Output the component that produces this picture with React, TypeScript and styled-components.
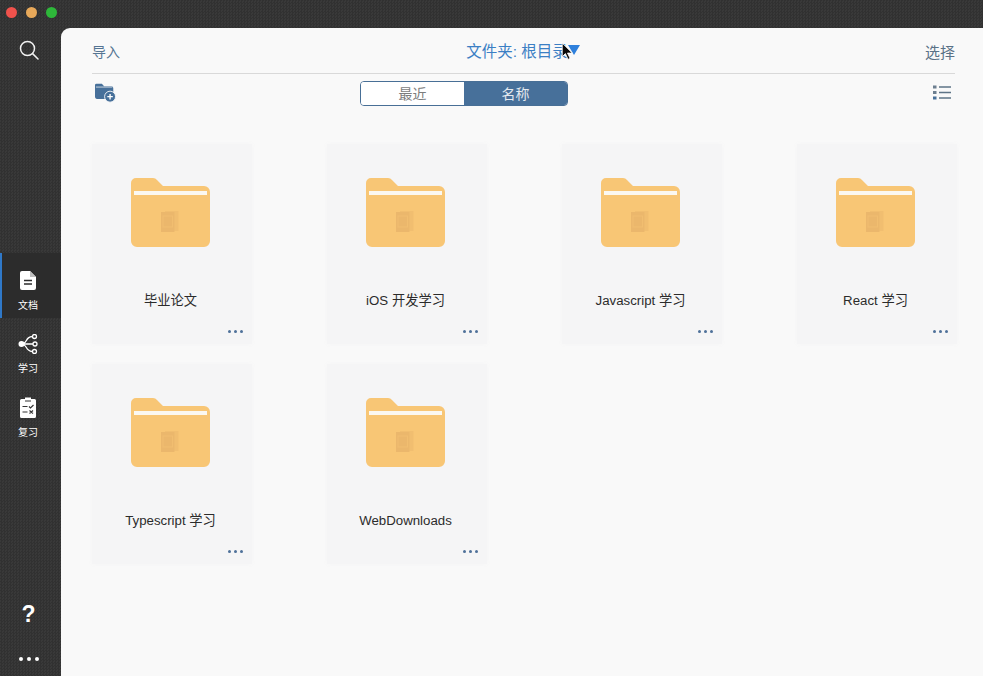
import { createGlobalStyle, styled } from "styled-components";

const GlobalStyle = createGlobalStyle`
  html, body {
    margin: 0;
    padding: 0;
    height: 100%;
    overflow: hidden;
    background: #343434;
    font-family: "Liberation Sans", "Noto Sans CJK SC", sans-serif;
  }
`;

const Window = styled.div`
  position: relative;
  width: 983px;
  height: 676px;
  display: flex;
  flex-direction: column;
  background: repeating-conic-gradient(#313131 0 25%, #393939 0 50%) 0 0 / 3px 3px;
`;

const TitleBar = styled.div`
  height: 28px;
  flex: none;
  display: flex;
  align-items: center;
  gap: 9px;
  padding: 0 0 4px 6px;
  box-sizing: border-box;
`;

const Light = styled.span<{ $color: string }>`
  width: 11px;
  height: 11px;
  border-radius: 50%;
  background: ${(p) => p.$color};
`;

const Body = styled.div`
  flex: 1;
  display: flex;
  min-height: 0;
`;

const Sidebar = styled.nav`
  width: 61px;
  flex: none;
  display: flex;
  flex-direction: column;
  align-items: stretch;
`;

const SearchButton = styled.div`
  height: 44px;
  display: flex;
  justify-content: center;
  align-items: center;
  padding-right: 3px;
`;

const NavGroup = styled.div`
  margin-top: 181px;
  display: flex;
  flex-direction: column;
`;

const NavItem = styled.div<{ $active?: boolean; $height: number; $top: number }>`
  height: ${(p) => p.$height}px;
  box-sizing: border-box;
  display: flex;
  flex-direction: column;
  align-items: center;
  padding: ${(p) => p.$top}px 7px 0 0;
  gap: 8px;
  color: #fff;
  font-size: 10px;
  line-height: 14px;
  background: ${(p) => (p.$active ? "#2c2c2c" : "transparent")};
  border-left: 2px solid ${(p) => (p.$active ? "#2f78c8" : "transparent")};
`;

const NavIcon = styled.span`
  height: 21px;
  display: flex;
  align-items: center;
`;

const SidebarFoot = styled.div`
  margin-top: auto;
  display: flex;
  flex-direction: column;
  align-items: center;
  padding: 0 4px 15px 0;
  gap: 30px;
  color: #fff;
`;

const Help = styled.span`
  font-size: 23px;
  font-weight: 700;
  line-height: 26px;
`;

const MoreDots = styled.span<{ $color: string; $size: number }>`
  display: flex;
  gap: ${(p) => p.$size}px;
  & > i {
    width: ${(p) => p.$size}px;
    height: ${(p) => p.$size}px;
    border-radius: 50%;
    background: ${(p) => p.$color};
  }
`;

const Main = styled.main`
  flex: 1;
  background: #f9f9f9;
  border-top-left-radius: 9px;
  padding: 0 28px 0 31px;
  display: flex;
  flex-direction: column;
  min-width: 0;
`;

const Header = styled.header`
  height: 46px;
  flex: none;
  display: grid;
  grid-template-columns: 1fr auto 1fr;
  align-items: center;
  border-bottom: 1px solid #d9d9d9;
  padding-top: 2px;
  box-sizing: border-box;
`;

const ImportLink = styled.span`
  color: #557593;
  font-size: 14px;
  margin-top: -1px;
`;

const FolderTitle = styled.span`
  color: #3b7fc4;
  font-size: 15.5px;
  display: flex;
  align-items: center;
  margin: -3px 0 0 -1px;
`;

const Caret = styled.span`
  width: 0;
  height: 0;
  margin-top: -1px;
  border-left: 6px solid transparent;
  border-right: 6px solid transparent;
  border-top: 10px solid #2f80dc;
`;

const SelectLink = styled.span`
  justify-self: end;
  color: #5a7186;
  font-size: 15px;
`;

const Toolbar = styled.div`
  height: 39px;
  flex: none;
  display: grid;
  grid-template-columns: 268px 208px 1fr;
  align-items: center;
`;

const Segmented = styled.div`
  height: 25px;
  display: flex;
  box-sizing: border-box;
  border: 1px solid #486f96;
  border-radius: 4px;
  overflow: hidden;
  margin-top: -1px;
`;

const Segment = styled.span<{ $active?: boolean }>`
  flex: 1;
  display: flex;
  align-items: center;
  justify-content: center;
  font-size: 14px;
  background: ${(p) => (p.$active ? "#47709a" : "#fff")};
  color: ${(p) => (p.$active ? "#e4e9ef" : "#7d7d7d")};
`;

const ListToggle = styled.span`
  justify-self: end;
  display: flex;
  margin: -3px 4px 0 0;
`;

const NewFolder = styled.span`
  display: flex;
  margin: -1px 0 0 3px;
`;

const Grid = styled.section`
  margin-top: 31px;
  display: grid;
  grid-template-columns: repeat(4, 160px);
  grid-auto-rows: 200px;
  column-gap: 75px;
  row-gap: 20px;
`;

const Card = styled.article`
  background: #f5f5f6;
  box-shadow: 0 0 5px #f5f5f6;
  display: flex;
  flex-direction: column;
  align-items: center;
  padding: 34px 3px 0 0;
  box-sizing: border-box;
`;

const CardName = styled.div`
  margin-top: 45px;
  font-size: 13.25px;
  line-height: 18px;
  color: #2b2b2b;
  white-space: nowrap;
`;

const CardMore = styled.div`
  margin-top: 20px;
  align-self: flex-end;
  margin-right: 6px;
`;

const Cursor = styled.svg`
  position: absolute;
  left: 561px;
  top: 42px;
`;

function FolderIcon() {
  return (
    <svg width="79" height="69" viewBox="0 0 79 69">
      <path d="M0 5a5 5 0 0 1 5-5h17a5 5 0 0 1 4 2l6 6h41a6 6 0 0 1 6 6v49a6 6 0 0 1-6 6H6a6 6 0 0 1-6-6z" fill="#f8c675" />
      <rect x="3" y="13" width="73" height="4" fill="#fbf8f1" />
      <rect x="34" y="33" width="13.500" height="20" fill="#f1be70" />
      <rect x="30" y="34" width="13.500" height="20" fill="#ebb76c" />
      <rect x="32" y="38" width="9.500" height="11" fill="none" stroke="#f1be70" strokeWidth="1" />
    </svg>
  );
}

const folders = [
  "毕业论文",
  "iOS 开发学习",
  "Javascript 学习",
  "React 学习",
  "Typescript 学习",
  "WebDownloads",
];

export default function App() {
  return (
    <Window>
      <GlobalStyle />
      <TitleBar>
        <Light $color="#f0524c" />
        <Light $color="#e8a95a" />
        <Light $color="#2eb83a" />
      </TitleBar>
      <Body>
        <Sidebar>
          <SearchButton>
            <svg width="20" height="20" viewBox="0 0 20 20" fill="none" stroke="#f2f2f2" strokeWidth="1.5">
              <circle cx="8.500" cy="8.500" r="7" />
              <path d="M13.600 13.600 19 19" strokeLinecap="round" />
            </svg>
          </SearchButton>
          <NavGroup>
            <NavItem $active $height={65} $top={17}>
              <NavIcon>
                <svg width="16" height="19" viewBox="0 0 16 19">
                  <path d="M2 0h8l6 6v11a2 2 0 0 1-2 2H2a2 2 0 0 1-2-2V2a2 2 0 0 1 2-2z" fill="#fff" />
                  <path d="M4 9.500h8M4 13h8" stroke="#2c2c2c" strokeWidth="1.400" />
                  <path d="M10 0v6h6" fill="#bdbdbd" />
                </svg>
              </NavIcon>
              文档
            </NavItem>
            <NavItem $height={64} $top={15}>
              <NavIcon>
                <svg width="20" height="20" viewBox="0 0 20 20" fill="none" stroke="#fff" strokeWidth="1.300">
                  <circle cx="3.500" cy="10" r="3" fill="#fff" stroke="none" />
                  <path d="M6 10h9M6 9c3-1 2-6 8-6.500M6 11c3 1 2 6 8 6.500" />
                  <circle cx="16.500" cy="2.500" r="2" />
                  <circle cx="17" cy="10" r="2" />
                  <circle cx="16.500" cy="17.500" r="2" />
                </svg>
              </NavIcon>
              学习
            </NavItem>
            <NavItem $height={64} $top={15}>
              <NavIcon>
                <svg width="16" height="21" viewBox="0 0 16 21">
                  <path d="M1.500 2H5V0.500h6V2h3.500A1.500 1.500 0 0 1 16 3.500v16a1.500 1.500 0 0 1-1.500 1.500h-13A1.500 1.500 0 0 1 0 19.500v-16A1.500 1.500 0 0 1 1.500 2z" fill="#fff" />
                  <path d="M5 4h6" stroke="#343434" strokeWidth="1" />
                  <path d="M2.500 9.500h5M2.500 15h5M9 9.500l1.500 1.500 3-3M9.500 13.500l3.500 3M13 13.500l-3.500 3" stroke="#343434" strokeWidth="1.200" fill="none" />
                </svg>
              </NavIcon>
              复习
            </NavItem>
          </NavGroup>
          <SidebarFoot>
            <Help>?</Help>
            <MoreDots $color="#fff" $size={4}>
              <i />
              <i />
              <i />
            </MoreDots>
          </SidebarFoot>
        </Sidebar>
        <Main>
          <Header>
            <ImportLink>导入</ImportLink>
            <FolderTitle>
              文件夹: 根目录
              <Caret />
            </FolderTitle>
            <SelectLink>选择</SelectLink>
          </Header>
          <Toolbar>
            <NewFolder>
              <svg width="21" height="20" viewBox="0 0 23 21">
                <path d="M0 2a1.500 1.500 0 0 1 1.500-1.500h6L10 3h8a2 2 0 0 1 2 2v10a2 2 0 0 1-2 2H2a2 2 0 0 1-2-2z" fill="#47709a" />
                <path d="M1 4h18" stroke="#f9f9f9" strokeWidth="0.800" />
                <circle cx="16.500" cy="14.500" r="6" fill="#47709a" stroke="#f9f9f9" strokeWidth="1" />
                <path d="M13.500 14.500h6M16.500 11.500v6" stroke="#fff" strokeWidth="1.500" />
              </svg>
            </NewFolder>
            <Segmented>
              <Segment>最近</Segment>
              <Segment $active>名称</Segment>
            </Segmented>
            <ListToggle>
              <svg width="18" height="15" viewBox="0 0 18 15">
                <path d="M0 0.500h3.500v3H0zM0 6h3.500v3H0z" fill="#6d7f90" />
                <path d="M0 11.500h3.500v3H0z" fill="#47709a" />
                <path d="M6 2h12M6 7.500h12M6 13h12" stroke="#5e7487" strokeWidth="1.300" />
              </svg>
            </ListToggle>
          </Toolbar>
          <Grid>
            {folders.map((name) => (
              <Card key={name}>
                <FolderIcon />
                <CardName>{name}</CardName>
                <CardMore>
                  <MoreDots $color="#4f7199" $size={3}>
                    <i />
                    <i />
                    <i />
                  </MoreDots>
                </CardMore>
              </Card>
            ))}
          </Grid>
        </Main>
      </Body>
      <Cursor width="13" height="19" viewBox="0 0 12 18">
        <path d="M1 1v13l3-3 2.500 5.500 2-1L6 10.500h4.500z" fill="#0a0a0a" stroke="#fff" strokeWidth="0.800" />
      </Cursor>
    </Window>
  );
}
